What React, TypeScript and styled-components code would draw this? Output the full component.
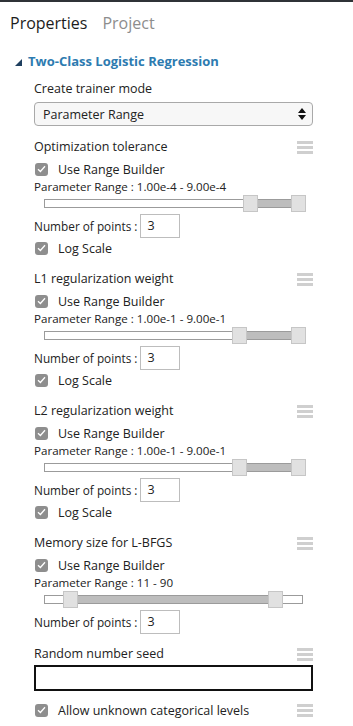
import { createGlobalStyle } from "styled-components";
import styled from "styled-components";

const GlobalStyle = createGlobalStyle`
  body {
    margin: 0;
    background: #ffffff;
    font-family: "Open Sans", "Noto Sans", sans-serif;
    color: #222;
  }
`;

const Panel = styled.div`
  width: 353px;
  min-height: 726px;
  border-top: 2px solid #2f3337;
  box-sizing: border-box;
  overflow: hidden;
`;

const Tabs = styled.div`
  display: flex;
  gap: 15px;
  padding: 10px 0 0 10px;
  height: 32px;
  box-sizing: border-box;
`;

const Tab = styled.div<{ $active?: boolean }>`
  font-size: 16px;
  line-height: 22px;
  color: ${(p) => (p.$active ? "#1c1c1c" : "#8d8d8d")};
`;

const SectionHeader = styled.div`
  display: flex;
  align-items: center;
  gap: 6px;
  margin: 17px 0 0 15px;
  height: 20px;
`;

const Caret = styled.span`
  width: 0;
  height: 0;
  border-left: 7px solid transparent;
  border-bottom: 7px solid #1f3f5f;
  margin-top: 2px;
`;

const SectionTitle = styled.div`
  font-size: 13px;
  font-weight: 700;
  color: #2d7bb0;
`;

const Params = styled.div`
  display: flex;
  flex-direction: column;
  padding: 0 40px 0 34px;
`;

const Label = styled.div<{ $top?: number }>`
  display: flex;
  justify-content: space-between;
  align-items: center;
  font-size: 12.5px;
  line-height: 18px;
  height: 18px;
  margin-top: ${(p) => p.$top ?? 0}px;
`;

const Handle = styled.div`
  display: flex;
  flex-direction: column;
  gap: 2px;
  width: 16px;
  span {
    height: 3px;
    background: #cfcfcf;
  }
`;

const Select = styled.div`
  display: flex;
  align-items: center;
  justify-content: space-between;
  height: 24px;
  margin-top: 4px;
  padding: 0 6px 0 8px;
  border: 1px solid #a9a9a9;
  border-radius: 4px;
  background: #f7f7f7;
  font-size: 12.5px;
  box-sizing: border-box;
`;

const CheckRow = styled.div<{ $top?: number }>`
  display: flex;
  align-items: center;
  gap: 10px;
  height: 20px;
  font-size: 12.5px;
  margin-top: ${(p) => p.$top ?? 0}px;
`;

const Box = styled.span`
  width: 13px;
  height: 13px;
  border-radius: 3px;
  background: #8e8e8e;
  display: flex;
  align-items: center;
  justify-content: center;
  margin-left: 1px;
`;

const RangeText = styled.div`
  font-size: 11.6px;
  line-height: 16px;
  height: 16px;
`;

const Slider = styled.div<{ $width: number }>`
  position: relative;
  width: ${(p) => p.$width}px;
  height: 18px;
  margin-left: 10px;
`;

const Track = styled.div`
  position: absolute;
  left: 0;
  right: 0;
  top: 4px;
  height: 9px;
  border: 1px solid #9b9b9b;
  background: #fff;
  box-sizing: border-box;
`;

const Fill = styled.div`
  position: absolute;
  top: 4px;
  height: 9px;
  background: #bdbdbd;
  border-top: 1px solid #9b9b9b;
  border-bottom: 1px solid #9b9b9b;
  box-sizing: border-box;
`;

const Thumb = styled.div`
  position: absolute;
  top: 0;
  width: 15px;
  height: 17px;
  background: #e1e1e1;
  border: 1px solid #c6c6c6;
  box-sizing: border-box;
`;

const PointsRow = styled.div`
  display: flex;
  align-items: center;
  gap: 3px;
  height: 24px;
  margin-top: 1px;
  font-size: 11.8px;
`;

const PointsInput = styled.div`
  width: 40px;
  height: 24px;
  border: 1px solid #bdbdbd;
  box-sizing: border-box;
  padding-left: 6px;
  line-height: 22px;
  font-size: 12.5px;
`;

const SeedInput = styled.div`
  height: 26px;
  margin-top: 2px;
  border: 2px solid #111;
  box-sizing: border-box;
`;

const Check = () => (
  <Box>
    <svg width="9" height="8" viewBox="0 0 9 8">
      <path d="M1 4.2 L3.4 6.5 L8 1.2" stroke="#fff" strokeWidth="1.3" fill="none" />
    </svg>
  </Box>
);

const Hamburger = () => (
  <Handle>
    <span />
    <span />
    <span />
  </Handle>
);

type Group = {
  title: string;
  range: string;
  width: number;
  low: number;
  high: number;
  log: boolean;
};

const groups: Group[] = [
  { title: "Optimization tolerance", range: "1.00e-4 - 9.00e-4", width: 262, low: 199, high: 247, log: true },
  { title: "L1 regularization weight", range: "1.00e-1 - 9.00e-1", width: 262, low: 188, high: 247, log: true },
  { title: "L2 regularization weight", range: "1.00e-1 - 9.00e-1", width: 262, low: 188, high: 247, log: true },
  { title: "Memory size for L-BFGS", range: "11 - 90", width: 259, low: 19, high: 224, log: false },
];

const RangeGroup = ({ g }: { g: Group }) => (
  <>
    <Label $top={12}>
      {g.title}
      <Hamburger />
    </Label>
    <CheckRow $top={3}>
      <Check />
      Use Range Builder
    </CheckRow>
    <RangeText>Parameter Range : {g.range}</RangeText>
    <Slider $width={g.width}>
      <Track />
      <Fill style={{ left: g.low + 14, width: g.high - g.low - 14 }} />
      <Thumb style={{ left: g.low }} />
      <Thumb style={{ left: g.high }} />
    </Slider>
    <PointsRow>
      Number of points :<PointsInput>3</PointsInput>
    </PointsRow>
    {g.log && (
      <CheckRow>
        <Check />
        Log Scale
      </CheckRow>
    )}
  </>
);

export default function App() {
  return (
    <>
      <GlobalStyle />
      <Panel>
        <Tabs>
          <Tab $active>Properties</Tab>
          <Tab>Project</Tab>
        </Tabs>
        <SectionHeader>
          <Caret />
          <SectionTitle>Two-Class Logistic Regression</SectionTitle>
        </SectionHeader>
        <Params>
          <Label $top={9}>Create trainer mode</Label>
          <Select>
            Parameter Range
            <svg width="8" height="12" viewBox="0 0 8 12">
              <path d="M4 0 L8 5 L0 5 Z M0 7 L8 7 L4 12 Z" fill="#111" />
            </svg>
          </Select>
          {groups.map((g) => (
            <RangeGroup key={g.title} g={g} />
          ))}
          <Label $top={11}>
            Random number seed
            <Hamburger />
          </Label>
          <SeedInput />
          <CheckRow $top={9}>
            <Check />
            <span style={{ flex: 1 }}>Allow unknown categorical levels</span>
            <Hamburger />
          </CheckRow>
        </Params>
      </Panel>
    </>
  );
}
